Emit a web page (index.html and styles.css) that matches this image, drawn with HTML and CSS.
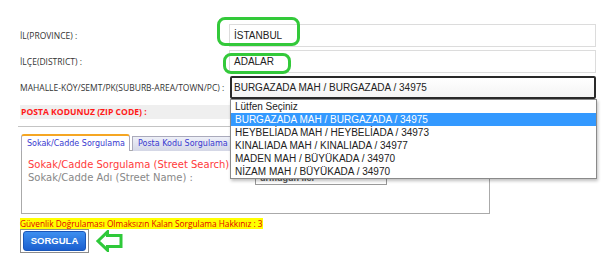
FILE: index.html
```html
<!DOCTYPE html>
<html lang="tr">
<head>
<meta charset="utf-8">
<title>Posta Kodu</title>
<link rel="stylesheet" href="styles.css">
</head>
<body>
<div class="page">
  <div class="row">
    <span class="label">İL(PROVINCE) :</span>
    <div class="field">
      <div class="input">İSTANBUL</div>
      <div class="ring ring-il"></div>
    </div>
  </div>
  <div class="row">
    <span class="label">İLÇE(DISTRICT) :</span>
    <div class="field">
      <div class="input">ADALAR</div>
      <div class="ring ring-ilce"></div>
    </div>
  </div>
  <div class="row row-select">
    <span class="label">MAHALLE-KÖY/SEMT/PK(SUBURB-AREA/TOWN/PC) :</span>
    <div class="field">
      <div class="select">BURGAZADA MAH / BURGAZADA / 34975</div>
      <ul class="dropdown">
        <li>Lütfen Seçiniz</li>
        <li class="selected">BURGAZADA MAH / BURGAZADA / 34975</li>
        <li>HEYBELİADA MAH / HEYBELİADA / 34973</li>
        <li>KINALIADA MAH / KINALIADA / 34977</li>
        <li>MADEN MAH / BÜYÜKADA / 34970</li>
        <li>NİZAM MAH / BÜYÜKADA / 34970</li>
      </ul>
    </div>
  </div>
  <div class="zip">POSTA KODUNUZ (ZIP CODE) :</div>
  <div class="rule"></div>

  <div class="tabs">
    <div class="tab active">Sokak/Cadde Sorgulama</div>
    <div class="tab">Posta Kodu Sorgulama</div>
  </div>
  <div class="panel">
    <div class="panel-title">Sokak/Cadde Sorgulama (Street Search)</div>
    <div class="panel-row">
      <span class="panel-label">Sokak/Cadde Adı (Street Name) :</span>
      <div class="street-input">urmuğun ilci</div>
    </div>
  </div>

  <div class="notice"><span>Güvenlik Doğrulaması Olmaksızın Kalan Sorgulama Hakkınız : 3</span></div>
  <div class="actions">
    <div class="btn-frame"><div class="btn">SORGULA</div></div>
    <svg class="arrow" width="27" height="22" viewBox="0 0 27 22">
      <path d="M2 11 L11.5 1.8 L11.5 5.5 L25 5.5 L25 16.5 L11.5 16.5 L11.5 20.2 Z" fill="#fff" stroke="#2fc93a" stroke-width="3" stroke-linejoin="miter"/>
    </svg>
  </div>
</div>
</body>
</html>
```
FILE: styles.css
```css
* { box-sizing: border-box; }
body {
  margin: 0;
  background: #fff;
  font-family: "Liberation Sans", Arial, sans-serif;
}
.page {
  padding: 24px 0 0 20px;
  width: 605px;
}
.row {
  display: grid;
  grid-template-columns: 209px 367px;
  align-items: center;
  height: 23px;
  margin-bottom: 3px;
}
.row-select { margin-top: 1px; margin-bottom: 0; }
.label {
  font-family: "Open Sans", sans-serif;
  font-size: 8.5px;
  color: #333;
  white-space: nowrap;
}
.field { position: relative; height: 23px; }
.input {
  height: 23px;
  border: 1px solid #dcdcdc;
  padding-left: 4px;
  font-size: 10px;
  line-height: 21px;
  color: #222;
}
.ring {
  position: absolute;
  border: 3px solid #33c93a;
  border-radius: 8px;
}
.ring-il { left: -12px; top: -7px; width: 83px; height: 29px; }
.ring-ilce { left: -6px; top: 3px; width: 68px; height: 21px; }
.select {
  margin-left: 1px;
  height: 23px;
  border: 2px solid #2a2a2a;
  border-radius: 2px;
  padding-left: 2px;
  font-size: 10px;
  line-height: 19px;
  color: #222;
  background: linear-gradient(#fff, #f4f4f4);
}
.dropdown {
  position: absolute;
  left: 1px;
  top: 23px;
  width: 367px;
  margin: 0;
  padding: 0;
  list-style: none;
  background: #fff;
  border: 1px solid #8a8a8a;
  box-shadow: 1px 2px 3px rgba(0,0,0,0.25);
  z-index: 5;
}
.dropdown li {
  height: 13px;
  line-height: 13px;
  padding-left: 4px;
  font-size: 10px;
  color: #222;
  white-space: nowrap;
}
.dropdown li.selected { background: #3399ff; color: #fff; }
.zip {
  margin-top: 6px;
  height: 14px;
  width: 576px;
  background: #efefef;
  padding-left: 1px;
  font-family: "Open Sans", sans-serif;
  font-weight: 700;
  font-size: 8.6px;
  line-height: 14px;
  color: #ff1a1a;
}
.rule {
  margin: 7px 0 0 -2px;
  width: 578px;
  height: 1px;
  background: #c4c4c4;
}
.tabs {
  display: flex;
  align-items: flex-end;
  gap: 2px;
  margin: 7px 0 -1px 1px;
  height: 17px;
  position: relative;
  z-index: 1;
}
.tab {
  font-family: "DejaVu Sans", Verdana, sans-serif;
  font-size: 8px;
  color: #3a3ad0;
  height: 15px;
  line-height: 14px;
  padding: 0 5px;
  border: 1px solid #aab;
  border-bottom: none;
  background: linear-gradient(#eef0f8, #d4d7e6);
  white-space: nowrap;
}
.tab.active {
  height: 17px;
  width: 109px;
  border-top: 2px solid #f5a623;
  border-radius: 3px 3px 0 0;
  background: #fff;
  line-height: 15px;
}
.panel {
  margin-left: 1px;
  width: 469px;
  height: 64px;
  border: 1px solid #aaa;
  padding: 7px 0 0 6px;
  font-family: "DejaVu Sans", Verdana, sans-serif;
}
.panel-title {
  font-size: 10px;
  line-height: 13px;
  color: #ff3b3b;
}
.panel-row {
  display: grid;
  grid-template-columns: 227px 132px;
  align-items: start;
}
.panel-label {
  font-size: 10px;
  line-height: 13px;
  color: #888;
  white-space: nowrap;
}
.street-input {
  margin-top: 0;
  height: 14px;
  border: 1px solid #999;
  font-family: "Liberation Sans", Arial, sans-serif;
  font-size: 9px;
  font-weight: 700;
  line-height: 12px;
  color: #555;
  padding-left: 4px;
  white-space: nowrap;
}
.notice {
  margin-top: 5px;
  height: 10px;
  font-family: "Open Sans", sans-serif;
  font-size: 8.3px;
  line-height: 10px;
  color: #e30000;
  white-space: nowrap;
}
.notice span { background: #ffff00; }
.actions {
  display: flex;
  align-items: center;
  gap: 7px;
}
.btn-frame {
  width: 69px;
  height: 24px;
  border: 1px solid #8c8c8c;
  padding: 1px 2px;
}
.btn {
  height: 20px;
  border-radius: 3px;
  background: linear-gradient(#3d8ff0, #1b5fcf);
  border: 1px solid #1a56b8;
  color: #fff;
  font-weight: 700;
  font-size: 9.5px;
  line-height: 18px;
  text-align: center;
}
.arrow { display: block; }
```
